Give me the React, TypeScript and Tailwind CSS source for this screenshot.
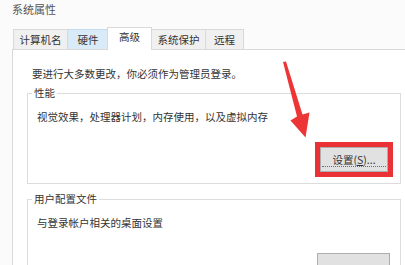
import React from "react";

const font = { fontFamily: '"Noto Sans CJK SC", "Noto Sans", sans-serif' };

function Tab({ label, w, active, hover }: { label: string; w: string; active?: boolean; hover?: boolean }) {
  if (active) {
    return (
      <div className={`${w} h-[23px] -mb-px -mx-px z-10 border border-b-0 border-[#d9d9d9] bg-white flex justify-center pt-[2px] text-[10.5px] leading-[14px] text-[#333]`}>
        {label}
      </div>
    );
  }
  return (
    <div
      className={`${w} h-[20px] border border-r-0 border-b-0 ${
        hover ? "border-[#c5dcf0] bg-[#d9eaf9]" : "border-[#d9d9d9] bg-[#f0f0f0]"
      } flex items-center justify-center text-[10.5px] leading-[14px] text-[#333]`}
    >
      {label}
    </div>
  );
}

export default function App() {
  return (
    <div className="relative w-[405px] h-[265px] overflow-hidden bg-[#fbfbfb] flex flex-col" style={font}>
      <div className="h-[27px] pl-[12px] pt-[2px] text-[11px] leading-[14px] text-[#555] shrink-0">系统属性</div>
      <div className="flex items-end pl-[13px] h-[22px] shrink-0">
        <Tab label="计算机名" w="w-[54px]" />
        <Tab label="硬件" w="w-[41px]" hover />
        <Tab label="高级" w="w-[45px]" active />
        <Tab label="系统保护" w="w-[54px]" />
        <div className="w-[39px] h-[20px] border border-b-0 border-[#d9d9d9] bg-[#f0f0f0] flex items-center justify-center text-[10.5px] leading-[14px] text-[#333]">
          远程
        </div>
      </div>
      <div className="flex-1 ml-[12px] border-t border-l border-[#d9d9d9] bg-white pt-[17px] text-[10.5px] leading-[14px] text-[#333]">
        <div className="pl-[19px]">要进行大多数更改，你必须作为管理员登录。</div>
        <div className="ml-[14px] mt-[12px] w-[374px] h-[91px] border border-[#dcdcdc] flex flex-col">
          <div className="-mt-[8px] ml-[4px] px-[2px] bg-white w-fit">性能</div>
          <div className="ml-[9px] mt-[10px]">视觉效果，处理器计划，内存使用，以及虚拟内存</div>
          <div className="flex justify-end mr-[7px] mt-[18px]">
            <div className="w-[78px] h-[35px] border-[5px] border-[#ea3136] bg-[#f4f4f4]">
              <div className="w-full h-full border border-[#adadad] bg-[#e1e1e1] flex flex-col items-center justify-center relative">
                <span className="text-[10.5px] leading-[14px]">
                  设置(<span className="underline">S</span>)...
                </span>
                <div className="absolute left-[1px] right-[1px] bottom-[4px] border-b border-dotted border-[#6a6a8a]" />
              </div>
            </div>
          </div>
        </div>
        <div className="ml-[14px] mt-[15px] w-[374px] h-[80px] border border-[#dcdcdc] flex flex-col">
          <div className="-mt-[8px] ml-[4px] px-[2px] bg-white w-fit">用户配置文件</div>
          <div className="ml-[9px] mt-[10px]">与登录帐户相关的桌面设置</div>
          <div className="flex justify-end mr-[10px] mt-[23px]">
            <div className="w-[73px] h-[24px] border border-[#adadad] bg-[#e1e1e1]" />
          </div>
        </div>
      </div>
      <svg className="absolute left-0 top-0 pointer-events-none" width="405" height="265" viewBox="0 0 405 265">
        <polygon
          points="283,62 286,61.5 302.5,114.5 309.5,112.5 305.5,137.5 290.5,120.5 297,116.5"
          fill="#ee3535"
        />
      </svg>
    </div>
  );
}
